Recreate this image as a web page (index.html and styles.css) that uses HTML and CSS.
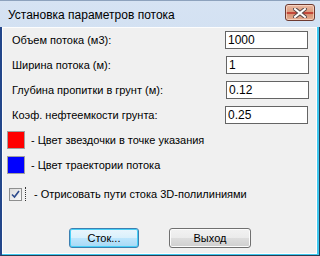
FILE: index.html
```html
<!DOCTYPE html>
<html lang="ru">
<head>
  <meta charset="UTF-8">
  <title>Установка параметров потока</title>
  <link rel="stylesheet" href="styles.css">
</head>
<body>
  <div id="window">
    <div id="titlebar">
      <span id="title">Установка параметров потока</span>
      <span id="close-button">
        <svg width="14" height="10" viewBox="0 0 14 10">
          <path d="M2 1 L12 9 M12 1 L2 9" stroke="#5a4a48" stroke-width="4" stroke-linecap="square"/>
          <path d="M2 1 L12 9 M12 1 L2 9" stroke="#ffffff" stroke-width="2" stroke-linecap="square"/>
        </svg>
      </span>
    </div>
    <div id="frame">
      <div id="client">
        <div class="field">
          <span class="label">Объем потока (м3):</span>
          <div class="textbox">1000</div>
        </div>
        <div class="field shifted">
          <span class="label">Ширина потока (м):</span>
          <div class="textbox">1</div>
        </div>
        <div class="field shifted">
          <span class="label">Глубина пропитки в грунт (м):</span>
          <div class="textbox">0.12</div>
        </div>
        <div class="field">
          <span class="label">Коэф. нефтеемкости грунта:</span>
          <div class="textbox">0.25</div>
        </div>

        <div class="color-row">
          <span class="swatch red"></span>
          <span class="label">- Цвет звездочки в точке указания</span>
        </div>
        <div class="color-row">
          <span class="swatch blue"></span>
          <span class="label">- Цвет траектории потока</span>
        </div>

        <div class="check-row">
          <span class="checkbox">
            <svg width="9" height="9" viewBox="0 0 9 9">
              <path d="M1 4.5 L3.5 7 L8 1" fill="none" stroke="#2d4a8c" stroke-width="1.6"/>
            </svg>
          </span>
          <span class="focus-box"></span>
          <span class="label">- Отрисовать пути стока 3D-полилиниями</span>
        </div>

        <div id="buttons">
          <button class="btn default">Сток...</button>
          <button class="btn exit">Выход</button>
        </div>
      </div>
    </div>
  </div>
</body>
</html>
```

FILE: styles.css
```css
body {
  margin: 0;
  font-family: "Liberation Sans", Arial, sans-serif;
  background: #fff;
}

#window {
  width: 320px;
  height: 256px;
  display: flex;
  flex-direction: column;
  background: linear-gradient(#d6e3f3, #bdd2ec);
}

#titlebar {
  height: 27px;
  display: flex;
  align-items: center;
  justify-content: space-between;
  padding: 0 5px 0 8px;
  border-top: 1px solid #8da2bd;
  box-sizing: border-box;
}

#title {
  font-size: 12px;
  color: #000;
  margin-top: 1px;
}

#close-button {
  width: 30px;
  height: 17px;
  box-sizing: border-box;
  border: 1px solid #6e3a30;
  border-radius: 3px;
  margin-top: -3px;
  display: flex;
  align-items: center;
  justify-content: center;
  background: linear-gradient(#eab9a2 0%, #dc9d80 45%, #c3483a 45%, #c3483a 62%, #d89475 62%, #e4ad92 100%);
  box-shadow: inset 0 0 0 1px rgba(255, 230, 215, 0.6);
}

#frame {
  flex: 1;
  display: flex;
  background: #3ec7ef;
  border-left: 2px solid #23468a;
  border-right: 1px solid #2c3a4e;
  border-bottom: 1px solid #2c3a4e;
}

#client {
  flex: 1;
  margin: 0 2px 1px 0;
  border: 1px solid #fdfdfd;
  background: #f0f0f0;
  padding: 3px 8px 0 9px;
  font-size: 11px;
  color: #000;
}

.field {
  height: 18px;
  margin-bottom: 7px;
  display: flex;
  align-items: center;
  justify-content: space-between;
}

.field.shifted .textbox {
  margin-right: -1px;
}

.textbox {
  width: 83px;
  height: 18px;
  box-sizing: border-box;
  border: 1px solid #646464;
  background: #fff;
  padding: 1px 2px;
  font-size: 12px;
  line-height: 14px;
}

.color-row {
  display: flex;
  align-items: center;
  height: 18px;
  margin: 0 0 7px -5px;
}

.color-row:first-of-type {
  margin-top: -4px;
}

.swatch {
  width: 18px;
  height: 18px;
  box-sizing: border-box;
  border: 1px solid #a0a0a0;
  margin-right: 6px;
}

.swatch.red {
  background: #ff0000;
}

.swatch.blue {
  background: #0000ff;
}

.check-row {
  display: flex;
  align-items: center;
  height: 16px;
  margin: 12px 0 0 -3px;
}

.checkbox {
  width: 13px;
  height: 13px;
  box-sizing: border-box;
  border: 1px solid #8e8f8f;
  background: linear-gradient(135deg, #dcdcdc, #fafafa);
  display: flex;
  align-items: center;
  justify-content: center;
}

.focus-box {
  width: 1px;
  height: 14px;
  margin: 0 7px 0 3px;
  border-left: 1px dotted #333;
}

#buttons {
  display: flex;
  margin: 26px 0 0 57px;
  gap: 30px;
}

.btn {
  height: 20px;
  box-sizing: border-box;
  border-radius: 3px;
  font-family: "Liberation Sans", Arial, sans-serif;
  font-size: 11px;
  color: #000;
  padding: 0;
  border: 1px solid #707070;
  background: linear-gradient(#f2f2f2 0%, #ebebeb 50%, #dddddd 50%, #cfcfcf 100%);
  box-shadow: inset 0 0 0 1px #fcfcfc;
}

.btn.default {
  width: 70px;
  border-color: #3c7fb1;
  background: linear-gradient(#eaf6fd 0%, #d9f0fc 50%, #bee6fd 50%, #a7d9f5 100%);
  box-shadow: inset 0 0 0 1px #48d0f7;
}

.btn.exit {
  width: 82px;
}
```
